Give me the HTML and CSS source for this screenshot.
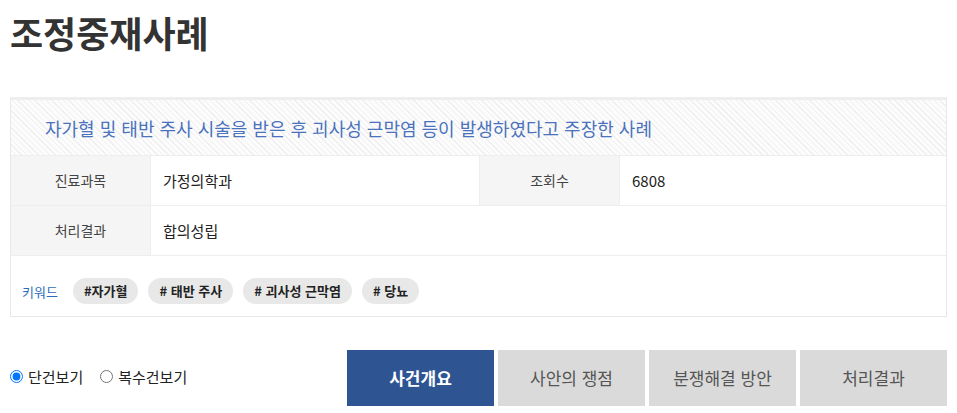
FILE: index.html
```html
<!DOCTYPE html>
<html lang="ko">
<head>
    <meta charset="UTF-8">
    <title>조정중재사례</title>
    <link rel="stylesheet" href="styles.css">
</head>
<body>
<div class="page">
    <h1 class="page-title">조정중재사례</h1>

    <div class="case-box">
        <div class="case-head">자가혈 및 태반 주사 시술을 받은 후 괴사성 근막염 등이 발생하였다고 주장한 사례</div>

        <div class="case-row">
            <div class="case-label">진료과목</div>
            <div class="case-value">가정의학과</div>
            <div class="case-label">조회수</div>
            <div class="case-value">6808</div>
        </div>
        <div class="case-row">
            <div class="case-label">처리결과</div>
            <div class="case-value wide">합의성립</div>
        </div>

        <div class="keywords">
            <span class="kw-title">키워드</span>
            <span class="tag">#자가혈</span>
            <span class="tag"># 태반 주사</span>
            <span class="tag"># 괴사성 근막염</span>
            <span class="tag"># 당뇨</span>
        </div>
    </div>

    <div class="bottom-bar">
        <div class="view-mode">
            <label><input type="radio" name="view" checked> 단건보기</label>
            <label><input type="radio" name="view"> 복수건보기</label>
        </div>
        <div class="tabs">
            <a class="tab active">사건개요</a>
            <a class="tab">사안의 쟁점</a>
            <a class="tab">분쟁해결 방안</a>
            <a class="tab">처리결과</a>
        </div>
    </div>
</div>
</body>
</html>
```

FILE: styles.css
```css
body {
    margin: 0;
    font-family: "Noto Sans CJK KR", "Noto Sans", sans-serif;
    color: #333;
    background: #fff;
}

.page {
    padding: 0 10px;
}

.page-title {
    margin: 0;
    padding-top: 8px;
    font-size: 36px;
    line-height: 48px;
    font-weight: bold;
    color: #333;
}

.case-box {
    margin-top: 41px;
    border: 1px solid #e8e8e8;
    border-top: 3px solid #eee;
}

.case-head {
    height: 55px;
    line-height: 57px;
    padding-left: 34px;
    font-size: 18px;
    color: #4a72bd;
    border-bottom: 1px solid #eee;
    background: #fcfcfc repeating-linear-gradient(45deg, #fcfcfc 0, #fcfcfc 3px, #efefef 3px, #efefef 4px);
}

.case-row {
    display: grid;
    grid-template-columns: 140px 329px 140px 1fr;
    height: 49px;
    border-bottom: 1px solid #eee;
}

.case-label {
    background: #f5f5f5;
    text-align: center;
    line-height: 49px;
    font-size: 14px;
    color: #444;
    border-right: 1px solid #eee;
}

.case-value {
    padding-left: 12px;
    line-height: 49px;
    font-size: 15px;
    color: #222;
    border-right: 1px solid #eee;
}

.case-value:last-child {
    border-right: none;
}

.case-value.wide {
    grid-column: 2 / 5;
}

.keywords {
    display: flex;
    align-items: center;
    gap: 10px;
    padding: 22px 11px 12px;
}

.kw-title {
    font-size: 13px;
    color: #2a6cb8;
    margin-right: 5px;
}

.tag {
    height: 26px;
    line-height: 26px;
    padding: 0 11px;
    border-radius: 13px;
    background: #e8e8e8;
    font-size: 13px;
    font-weight: bold;
    color: #222;
}

.bottom-bar {
    display: flex;
    justify-content: space-between;
    align-items: center;
    margin-top: 33px;
}

.view-mode {
    display: flex;
    gap: 17px;
    font-size: 15px;
    color: #222;
    margin-top: -3px;
}

.view-mode label {
    display: flex;
    align-items: center;
    gap: 5px;
}

.view-mode input {
    margin: 0;
    width: 13px;
    height: 13px;
}

.tabs {
    display: flex;
    gap: 4px;
    width: 600px;
}

.tab {
    flex: 1;
    height: 56px;
    line-height: 56px;
    text-align: center;
    background: #dadada;
    color: #555;
    font-size: 17px;
}

.tab.active {
    background: #2e5592;
    color: #fff;
    font-weight: bold;
}
```
